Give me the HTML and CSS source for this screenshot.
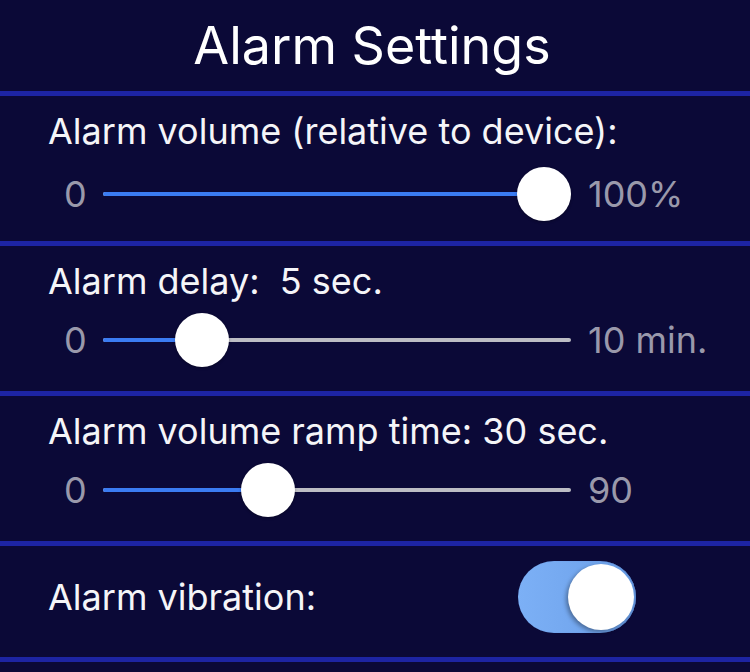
FILE: index.html
```html
<!DOCTYPE html>
<html lang="en">
<head>
  <meta charset="UTF-8" />
  <meta name="viewport" content="width=device-width, initial-scale=1" />
  <title>Alarm Settings</title>
  <link rel="stylesheet" href="styles.css">
</head>
<body>

<header>
  <h1 class="title">Alarm Settings</h1>
</header>

<section class="setting">
  <div class="label">Alarm volume (relative to device):</div>
  <div class="slider slider-first">
    <span class="range-min">0</span>
    <div class="track" style="--value: 1">
      <div class="track-line"></div>
      <div class="track-fill"></div>
      <div class="thumb"></div>
    </div>
    <span class="range-max">100%</span>
  </div>
</section>

<section class="setting">
  <div class="label">Alarm delay:&nbsp; 5 sec.</div>
  <div class="slider">
    <span class="range-min">0</span>
    <div class="track" style="--value: 0.174">
      <div class="track-line"></div>
      <div class="track-fill"></div>
      <div class="thumb"></div>
    </div>
    <span class="range-max">10 min.</span>
  </div>
</section>

<section class="setting">
  <div class="label">Alarm volume ramp time: 30 sec.</div>
  <div class="slider">
    <span class="range-min">0</span>
    <div class="track" style="--value: 0.3333">
      <div class="track-line"></div>
      <div class="track-fill"></div>
      <div class="thumb"></div>
    </div>
    <span class="range-max">90</span>
  </div>
</section>

<section class="setting setting-switch">
  <div class="label switch-label">Alarm vibration:</div>
  <label class="switch">
    <input type="checkbox" checked>
    <span class="knob"></span>
  </label>
</section>

</body>
</html>
```

FILE: styles.css
```css
body {
  font-family: 'Inter', 'Liberation Sans', sans-serif;
  margin: 0;
  background: #0b0937;
  color: #f5f5f8;
}

header {
  height: 60px;
  padding: 16px 6px 15px 0;
}

.title {
  margin: 0;
  font-size: 52px;
  line-height: 60px;
  font-weight: normal;
  text-align: center;
  color: #fff;
}

.setting {
  border-top: 5px solid #1d24a3;
  height: 132px;
  padding: 13px 0 0 48px;
}

.label {
  font-size: 36px;
  line-height: 44px;
}

.slider {
  display: flex;
  align-items: center;
  height: 54px;
  margin-top: 10px;
  padding-left: 16px;
  font-size: 36px;
  color: #9a99ab;
}

.slider-first {
  margin-top: 14px;
}

.range-min {
  width: 39px;
}

.range-max {
  margin-left: 17px;
}

.track {
  position: relative;
  width: 468px;
  height: 54px;
}

.track-line,
.track-fill {
  position: absolute;
  left: 0;
  top: 25px;
  height: 4px;
  border-radius: 2px;
}

.track-line {
  right: 0;
  background: #bdbdc4;
}

.track-fill {
  width: calc((100% - 54px) * var(--value) + 27px);
  background: #3b7cf2;
}

.thumb {
  position: absolute;
  top: 0;
  left: calc((100% - 54px) * var(--value));
  width: 54px;
  height: 54px;
  border-radius: 50%;
  background: #fff;
  box-shadow: 0 1px 3px rgba(0,0,0,0.3);
}

.setting-switch {
  display: grid;
  grid-template-columns: 470px auto;
  align-items: start;
  height: 96px;
  padding-top: 15px;
  border-bottom: 5px solid #1d24a3;
}

.switch-label {
  line-height: 72px;
}

.switch {
  position: relative;
  display: block;
  width: 118px;
  height: 72px;
}

.switch input {
  display: none;
}

.knob {
  position: absolute;
  inset: 0;
  border-radius: 36px;
  background: linear-gradient(90deg, #7cb0f6, #6b9fe8);
  box-shadow: inset -1px 0 1px #5a88cf;
}

.knob::after {
  content: "";
  position: absolute;
  top: 3px;
  right: 2px;
  width: 66px;
  height: 66px;
  border-radius: 50%;
  background: #fff;
  box-shadow: -2px 2px 4px rgba(0,0,0,0.35);
}
```
